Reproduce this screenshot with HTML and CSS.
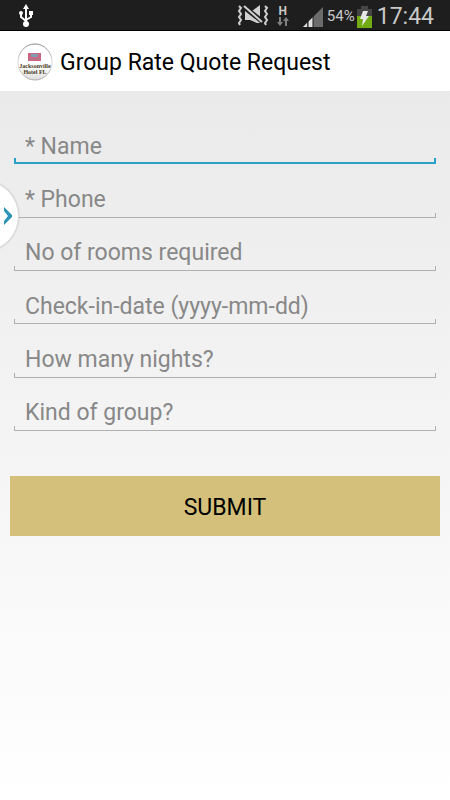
FILE: index.html
```html
<!DOCTYPE html>
<html lang="en">
<head>
    <meta charset="UTF-8">
    <meta name="viewport" content="width=device-width, initial-scale=1.0">
    <title>Group Rate Quote Request</title>
    <link rel="stylesheet" href="styles.css">
</head>
<body>
    <div class="status-bar">
        <svg class="usb" width="16" height="24" viewBox="0 0 16 24" fill="none" stroke="#fff" stroke-width="2">
            <path d="M8 4v16M3 10v3l5 4M13 9v4l-5 3"/>
            <path d="M8 0l3 5H5z" fill="#fff" stroke="none"/>
            <circle cx="8" cy="20" r="3" fill="#fff" stroke="none"/>
            <circle cx="3" cy="9" r="2" fill="#fff" stroke="none"/>
            <path d="M11 7h4v4h-4z" fill="#fff" stroke="none"/>
        </svg>
        <div class="status-icons">
            <!-- vibrate / muted -->
            <svg class="mute" width="32" height="24" viewBox="0 0 32 24">
                <path d="M8 6l15 12v2l-3 0-7-3H8zM15 8l8-6v13z" fill="#d0d0d0"/>
                <path d="M7 4l19 15" stroke="#1e1e1e" stroke-width="5"/>
                <path d="M7 3l18 16" stroke="#d0d0d0" stroke-width="2"/>
                <path d="M2 3l2 2-2 3 2 3-2 3 2 3-2 3 1 2M28 3l2 2-2 3 2 3-2 3 2 3-2 3 1 2" fill="none" stroke="#d0d0d0" stroke-width="2"/>
            </svg>
            <div class="network">
                <span>H</span>
                <svg width="12" height="9" viewBox="0 0 12 9" fill="#808080">
                    <path d="M2 0h2v5h2L3 9 0 5h2zM8 9h2V4h2L9 0 6 4h2z"/>
                </svg>
            </div>
            <svg class="signal" width="20" height="20" viewBox="0 0 20 20">
                <path d="M20 0v20H0z" fill="#6b6b6b"/>
                <path d="M0 20l4-4v4zM5 20v-5l5-5v10z" fill="#e0e0e0"/>
                <path d="M5 14v6M10 9v11" stroke="#1e1e1e"/>
            </svg>
            <span class="percent">54%</span>
            <svg class="battery" width="15" height="22" viewBox="0 0 15 22">
                <path d="M4 0h7v3h4v19H0V3h4z" fill="#454545"/>
                <path d="M0 10h15v12H0z" fill="#72ab12"/>
                <path d="M6 5h5l-2 5h3l-7 10 1-7H3z" fill="#e8e8e8"/>
            </svg>
            <span class="clock">17:44</span>
        </div>
    </div>

    <header class="title-bar">
        <svg class="logo" width="36" height="38" viewBox="0 0 36 38">
            <defs>
                <linearGradient id="rim" x1="0" y1="0" x2="0" y2="1">
                    <stop offset="0" stop-color="#888"/>
                    <stop offset="0.5" stop-color="#ddd"/>
                    <stop offset="1" stop-color="#aaa"/>
                </linearGradient>
                <linearGradient id="disc" x1="0" y1="0" x2="0" y2="1">
                    <stop offset="0.6" stop-color="#fff"/>
                    <stop offset="1" stop-color="#ddd"/>
                </linearGradient>
            </defs>
            <ellipse cx="18" cy="19" rx="17" ry="18" fill="url(#disc)" stroke="url(#rim)"/>
            <path d="M11 10h13v8H11z" fill="#cc6680"/>
            <path d="M14 11h7v3h-7z" fill="#7f9cb5"/>
            <path d="M12 16h11" stroke="#9c8799" stroke-dasharray="2 1"/>
            <text x="18" y="25">Jacksonville</text>
            <text x="18" y="31">Hotel FL</text>
        </svg>
        <h1>Group Rate Quote Request</h1>
    </header>

    <main>
        <form class="quote-form">
            <div class="fields">
                <div class="field active">
                    <input type="text" id="name" placeholder=" ">
                    <label for="name">* Name</label>
                </div>
                <div class="field">
                    <input type="tel" id="phone" placeholder=" ">
                    <label for="phone">* Phone</label>
                </div>
                <div class="field">
                    <input type="text" id="rooms" placeholder=" ">
                    <label for="rooms">No of rooms required</label>
                </div>
                <div class="field">
                    <input type="text" id="checkin" placeholder=" ">
                    <label for="checkin">Check-in-date (yyyy-mm-dd)</label>
                </div>
                <div class="field">
                    <input type="text" id="nights" placeholder=" ">
                    <label for="nights">How many nights?</label>
                </div>
                <div class="field">
                    <input type="text" id="group" placeholder=" ">
                    <label for="group">Kind of group?</label>
                </div>
            </div>
            <button type="submit">SUBMIT</button>
        </form>
        <button type="button" class="drawer-handle" aria-label="Open menu">
            <svg width="8" height="18" viewBox="0 0 8 18">
                <path d="M0 0l8 8v2l-8 8v-4l4-5-4-5z" fill="#2b93b8"/>
            </svg>
        </button>
    </main>
</body>
</html>
```

FILE: styles.css
```css
* {
    box-sizing: border-box;
}
body {
    margin: 0;
    min-height: 100vh;
    display: flex;
    flex-direction: column;
    font-family: Roboto, "Liberation Sans", sans-serif;
    background-color: #fff;
    color: #000;
}
.status-bar {
    display: flex;
    align-items: center;
    justify-content: space-between;
    height: 31px;
    padding: 0 16px 0 18px;
    background-color: #1e1e1e;
    border-bottom: 1px solid #000;
    color: #c8c8c8;
}
.usb {
    margin-top: 1px;
}
.status-icons {
    display: flex;
    align-items: center;
}
.network {
    display: flex;
    flex-direction: column;
    align-items: center;
    margin: 0 14px 0 8px;
    font-size: 12px;
    line-height: 12px;
    font-weight: bold;
}
.signal {
    margin-top: 4px;
}
.percent {
    margin: 0 2px 0 4px;
    padding-top: 2px;
    font-size: 15px;
    line-height: 30px;
}
.battery {
    margin-top: 4px;
}
.clock {
    margin-left: 5px;
    padding-top: 4px;
    font-size: 23px;
    line-height: 30px;
}
.title-bar {
    display: flex;
    align-items: center;
    gap: 7px;
    height: 60px;
    padding: 2px 17px 0;
    background-color: #fff;
}
.logo text {
    font-family: "Liberation Serif", serif;
    font-size: 6px;
    font-weight: bold;
    text-anchor: middle;
    fill: #4a3a20;
}
h1 {
    margin: 0;
    padding-top: 1px;
    font-size: 23px;
    line-height: 30px;
    font-weight: normal;
}
main {
    position: relative;
    flex: 1;
    padding: 20px 10px;
    background: linear-gradient(#eaeaea, #fff);
    overflow: hidden;
}
.fields {
    display: grid;
    grid-template-rows: repeat(6, 1fr);
    height: 320px;
    margin: 0 4px 45px;
}
.field {
    display: grid;
}
/* the label sits inside the box until something is typed */
.field input,
.field label {
    grid-area: 1 / 1;
    padding: 18px 11px 0;
    font-size: 23px;
}
.field label {
    align-self: center;
    line-height: 30px;
    color: #888;
    cursor: text;
}
.field input {
    width: 100%;
    min-width: 0;
    border: none;
    outline: none;
    font-family: inherit;
    color: #000;
    background:
        linear-gradient(#b0b0b0, #b0b0b0) left bottom / 1px 5px no-repeat,
        linear-gradient(#b0b0b0, #b0b0b0) right bottom / 1px 5px no-repeat,
        linear-gradient(#b0b0b0, #b0b0b0) bottom / 100% 1px no-repeat;
}
.field.active input {
    background:
        linear-gradient(#2a9fc8, #2a9fc8) left bottom / 2px 6px no-repeat,
        linear-gradient(#2a9fc8, #2a9fc8) right bottom / 2px 6px no-repeat,
        linear-gradient(#2a9fc8, #2a9fc8) bottom / 100% 2px no-repeat;
}
.field input:not(:placeholder-shown) + label {
    visibility: hidden;
}
.quote-form button {
    display: block;
    width: 100%;
    height: 60px;
    padding: 2px 0 0;
    border: none;
    background-color: #d4c07a;
    font-family: inherit;
    font-size: 23px;
    color: #000;
    cursor: pointer;
}
.drawer-handle {
    position: absolute;
    top: 89px;
    left: -53px;
    display: flex;
    align-items: center;
    justify-content: flex-end;
    width: 72px;
    height: 72px;
    padding: 0 6px 0 0;
    border: 1px solid #ddd;
    border-radius: 50%;
    background-color: #fff;
    box-shadow: 0 0 2px rgba(0, 0, 0, 0.2);
    cursor: pointer;
}
```
